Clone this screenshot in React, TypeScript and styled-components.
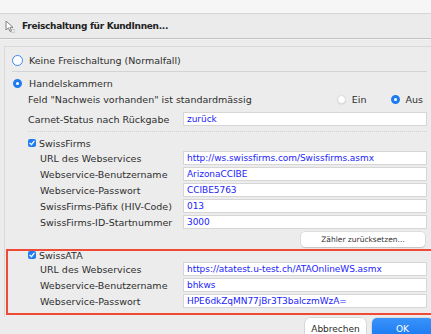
import React from "react";
import styled, { createGlobalStyle } from "styled-components";

const GlobalStyle = createGlobalStyle`
  html, body {
    margin: 0;
    padding: 0;
    background: #ececec;
    overflow: hidden;
  }
  body {
    font-family: "DejaVu Sans", "Liberation Sans", sans-serif;
    font-size: 9.5px;
    color: #2e2e2e;
  }
`;

const Window = styled.div`
  width: 431px;
  height: 334px;
  overflow: hidden;
`;

const TopStrip = styled.div`
  height: 13px;
  background: #f6f6f6;
  border-bottom: 1px solid #d6d6d6;
`;

const TitleBar = styled.div`
  height: 24px;
  display: flex;
  align-items: center;
  gap: 7px;
  padding-left: 5px;
  background: #ebebeb;
  border-bottom: 1px solid #c2c2c2;
  box-shadow: 0 1px 0 #f4f4f4;

  h1 {
    margin: 0;
    font-size: 9px;
    font-weight: bold;
    color: #222;
    letter-spacing: -0.3px;
  }
`;

const Panel = styled.div`
  margin: 7px 0 0 4px;
  padding: 0 4px 2px 7px;
  border-top: 1px solid #d9d9d9;
  border-left: 1px solid #d9d9d9;
  display: flex;
  flex-direction: column;
`;

const OptionRow = styled.div<{ $top?: number }>`
  height: 14px;
  margin-top: ${(p) => p.$top ?? 0}px;
  display: flex;
  align-items: center;
  gap: 6px;
`;

const Radio = styled.span<{ $state: "focus" | "on" | "off" }>`
  box-sizing: border-box;
  flex: none;
  border-radius: 50%;
  width: ${(p) => (p.$state === "focus" ? 11 : 9)}px;
  height: ${(p) => (p.$state === "focus" ? 11 : 9)}px;
  margin-left: ${(p) => (p.$state === "focus" ? 0 : 1)}px;
  margin-right: ${(p) => (p.$state === "focus" ? 0 : 1)}px;
  background: #fff;
  border: ${(p) =>
    p.$state === "focus"
      ? "1.5px solid #3d86f0"
      : p.$state === "on"
      ? "3px solid #1f7cf0"
      : "1px solid #dcdcdc"};
  box-shadow: ${(p) => (p.$state === "off" ? "0 0.5px 1px rgba(0,0,0,0.12)" : "none")};
`;

const Divider = styled.div<{ $top: number; $indent?: number; $dotted?: boolean }>`
  margin-top: ${(p) => p.$top}px;
  margin-left: ${(p) => p.$indent ?? 0}px;
  height: 0;
  border-top: 1px ${(p) => (p.$dotted ? "dotted #d2d2d2" : "solid #d3d3d3")};
`;

const Label = styled.span`
  white-space: nowrap;
`;

const ChoiceRow = styled.div<{ $top: number }>`
  height: 14px;
  margin-top: ${(p) => p.$top}px;
  padding-left: 16px;
  display: flex;
  align-items: center;
`;

const Choices = styled.div`
  margin-left: auto;
  margin-right: 4px;
  display: flex;
  align-items: center;
  gap: 5px;

  ${Label} + ${Radio} {
    margin-left: 19px;
  }
`;

const FieldRow = styled.div<{ $top: number; $indent: number }>`
  height: 14px;
  margin-top: ${(p) => p.$top}px;
  padding-left: ${(p) => p.$indent}px;
  display: flex;
  align-items: center;
  justify-content: space-between;
`;

const Input = styled.div`
  box-sizing: border-box;
  width: 244px;
  height: 14px;
  padding-left: 3px;
  background: #fff;
  border: 1px solid #d6d6d6;
  color: #1d1dfb;
  font-size: 9px;
  display: flex;
  align-items: center;
  white-space: nowrap;
  overflow: hidden;
  letter-spacing: -0.05px;
`;

const CheckRow = styled.div<{ $top: number; $indent: number; $height?: number }>`
  height: ${(p) => p.$height ?? 14}px;
  margin-top: ${(p) => p.$top}px;
  padding-left: ${(p) => p.$indent}px;
  display: flex;
  align-items: center;
  gap: 3px;
`;

const Check = styled.span`
  width: 8px;
  height: 8px;
  border-radius: 2px;
  background: #1f7cf0;
  display: flex;
  align-items: center;
  justify-content: center;
  flex: none;
`;

const SmallButton = styled.div`
  align-self: flex-end;
  margin: 3px 2px 0 0;
  width: 124px;
  height: 15px;
  border-radius: 4px;
  background: #fff;
  box-shadow: 0 0 0 0.5px rgba(0, 0, 0, 0.12), 0 1px 1px rgba(0, 0, 0, 0.12);
  display: flex;
  align-items: center;
  justify-content: center;
  font-size: 7.5px;
  color: #333;
`;

const Highlight = styled.div`
  margin: 2px -4px 0 -6px;
  padding: 0 4px 5px 20px;
  border: 2px solid #ee4a36;
  border-right: none;
  display: flex;
  flex-direction: column;
`;

const Footer = styled.div`
  margin-top: 1px;
  display: flex;
  justify-content: flex-end;
  gap: 6px;
  margin-right: -2px;
`;

const DialogButton = styled.div<{ $primary?: boolean }>`
  width: 61px;
  height: 22px;
  border-radius: 5px;
  display: flex;
  align-items: center;
  justify-content: center;
  font-size: 9px;
  background: ${(p) => (p.$primary ? "linear-gradient(#3a93fb, #1676f0)" : "#fff")};
  color: ${(p) => (p.$primary ? "#fff" : "#2a2a2a")};
  box-shadow: 0 0 0 0.5px rgba(0, 0, 0, 0.15), 0 1px 1px rgba(0, 0, 0, 0.12);
`;

const CursorIcon = () => (
  <svg width="10" height="13" viewBox="0 0 10 13">
    <path d="M1 1 L1 10 L3.4 7.8 L5 11.5 L6.4 10.9 L4.9 7.4 L8 7.4 Z" fill="#fff" stroke="#777" strokeWidth="0.9" strokeLinejoin="round" />
    <rect x="6.5" y="9.5" width="3" height="3" fill="none" stroke="#999" strokeWidth="0.6" strokeDasharray="0.8 0.6" />
  </svg>
);

const CheckMark = () => (
  <svg width="6" height="6" viewBox="0 0 6 6">
    <path d="M1 3.2 L2.5 4.7 L5 1.3" fill="none" stroke="#fff" strokeWidth="1.3" strokeLinecap="round" strokeLinejoin="round" />
  </svg>
);

const swissFirms = [
  ["URL des Webservices", "http://ws.swissfirms.com/Swissfirms.asmx"],
  ["Webservice-Benutzername", "ArizonaCCIBE"],
  ["Webservice-Passwort", "CCIBE5763"],
  ["SwissFirms-Päfix (HIV-Code)", "013"],
  ["SwissFirms-ID-Startnummer", "3000"],
];

const swissAta = [
  ["URL des Webservices", "https://atatest.u-test.ch/ATAOnlineWS.asmx"],
  ["Webservice-Benutzername", "bhkws"],
  ["Webservice-Passwort", "HPE6dkZqMN77jBr3T3balczmWzA="],
];

const App = () => {
  return (
    <Window>
      <GlobalStyle />
      <TopStrip />
      <TitleBar>
        <CursorIcon />
        <h1>Freischaltung für KundInnen...</h1>
      </TitleBar>
      <Panel>
        <OptionRow $top={6}>
          <Radio $state="focus" />
          <Label>Keine Freischaltung (Normalfall)</Label>
        </OptionRow>
        <Divider $top={4} />
        <OptionRow $top={4}>
          <Radio $state="on" />
          <Label>Handelskammern</Label>
        </OptionRow>
        <ChoiceRow $top={2}>
          <Label>Feld "Nachweis vorhanden" ist standardmässig</Label>
          <Choices>
            <Radio $state="off" />
            <Label>Ein</Label>
            <Radio $state="on" />
            <Label>Aus</Label>
          </Choices>
        </ChoiceRow>
        <FieldRow $top={6} $indent={16}>
          <Label>Carnet-Status nach Rückgabe</Label>
          <Input>zurück</Input>
        </FieldRow>
        <Divider $top={5} $indent={16} $dotted />
        <CheckRow $top={4} $indent={16}>
          <Check>
            <CheckMark />
          </Check>
          <Label>SwissFirms</Label>
        </CheckRow>
        {swissFirms.map(([label, value], i) => (
          <FieldRow key={label} $top={i === 0 ? 1 : 2} $indent={28}>
            <Label>{label}</Label>
            <Input>{value}</Input>
          </FieldRow>
        ))}
        <SmallButton>Zähler zurücksetzen...</SmallButton>
        <Highlight>
          <CheckRow $top={0} $indent={0} $height={8}>
            <Check>
              <CheckMark />
            </Check>
            <Label>SwissATA</Label>
          </CheckRow>
          {swissAta.map(([label, value], i) => (
            <FieldRow key={label} $top={i === 0 ? 3 : 2} $indent={12}>
              <Label>{label}</Label>
              <Input>{value}</Input>
            </FieldRow>
          ))}
        </Highlight>
      </Panel>
      <Footer>
        <DialogButton>Abbrechen</DialogButton>
        <DialogButton $primary>OK</DialogButton>
      </Footer>
    </Window>
  );
};

export default App;
